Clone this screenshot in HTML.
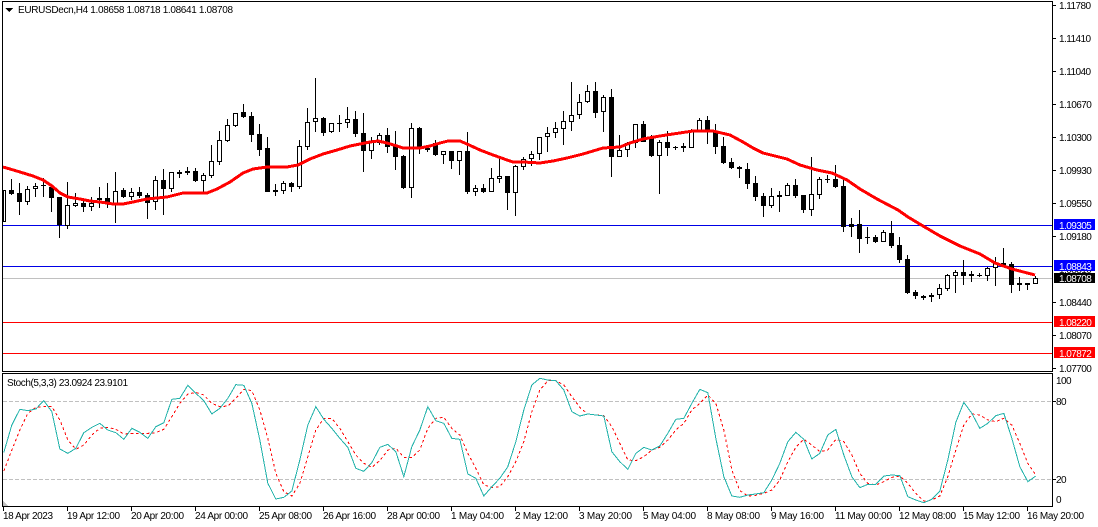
<!DOCTYPE html>
<html><head><meta charset="utf-8"><style>
html,body{margin:0;padding:0;background:#fff;width:1098px;height:527px;overflow:hidden}
svg{display:block;position:absolute;left:0;top:0}
text{font-family:"Liberation Sans",sans-serif;font-size:10px;fill:#000}
.p{letter-spacing:-.55px}
.w{fill:#fff}
</style></head><body>
<svg width="1098" height="527" viewBox="0 0 1098 527" xmlns="http://www.w3.org/2000/svg">
<text class="p" x="1059" y="273">1.08810</text>
<g shape-rendering="crispEdges">
<path stroke="#c0c0c0" fill="none" d="M3 278.5H1052"/>
<path stroke="#0000e6" fill="none" d="M3 225.5H1052M3 266.5H1052"/>
<path stroke="#f00" fill="none" d="M3 322.5H1052M3 353.5H1052"/>
<path stroke="#000" fill="none" d="M3.5 190V222M11.5 179V195M19.5 183V215M27.5 186V205M35.5 183V197M43.5 178V197M51.5 184V212M59.5 197V238M67.5 182V229M75.5 193V207M83.5 199V212M91.5 197V211M99.5 187V208M107.5 183V208M115.5 172V223M123.5 188V198M131.5 188V200M139.5 187V198M147.5 193V219M155.5 176V210M163.5 169V215M171.5 172V192M179.5 170V178M187.5 167V175M195.5 168V182M203.5 173V193M211.5 145V178M219.5 131V165M227.5 119V142M235.5 113V127M243.5 104V118M251.5 112V142M259.5 124V156M267.5 137V192M275.5 184V196M283.5 181V194M291.5 182V192M299.5 140V189M307.5 108V150M315.5 78V132M323.5 117V136M331.5 123V133M339.5 115V132M347.5 107V128M355.5 111V137M363.5 113V172M371.5 137V159M379.5 133V145M387.5 128V153M395.5 131V170M403.5 155V189M411.5 123V198M419.5 127V154M427.5 147V152M435.5 140V156M443.5 151V164M451.5 151V169M459.5 151V175M467.5 132V194M475.5 185V196M483.5 184V193M491.5 168V192M499.5 159V183M507.5 176V210M515.5 165V216M523.5 157V170M531.5 151V166M539.5 137V160M547.5 127V152M555.5 122V138M563.5 111V145M571.5 82V131M579.5 94V119M587.5 85V103M595.5 82V118M603.5 95V132M611.5 89V177M619.5 135V157M627.5 142V157M635.5 124V148M643.5 121V142M651.5 135V157M659.5 140V194M667.5 131V156M675.5 146V150M683.5 143V152M691.5 129V148M699.5 118V132M707.5 116V144M715.5 124V154M723.5 137V164M731.5 158V169M739.5 166V178M747.5 163V189M755.5 176V201M763.5 193V217M771.5 188V208M779.5 191V212M787.5 183V196M795.5 179V198M803.5 195V213M811.5 157V216M819.5 177V199M827.5 175V183M835.5 165V188M843.5 180V232M851.5 218V237M859.5 210V253M867.5 227V244M875.5 235V243M883.5 230V242M891.5 221V248M899.5 237V263M907.5 255V294M915.5 290V299M923.5 295V300M931.5 293V302M939.5 284V299M947.5 274V291M955.5 270V293M963.5 260V285M971.5 271V282M979.5 273V277M987.5 267V281M995.5 257V286M1003.5 248V266M1011.5 262V293M1019.5 277V291M1027.5 283V290M1035.5 276V284"/>
<path stroke="#000" fill="#fff" d="M3.5 190.5h2V221.5h-2zM25.5 189.5h4V201.5h-4zM33.5 186.5h4V188.5h-4zM65.5 205.5h4V225.5h-4zM73.5 203.5h4V205.5h-4zM89.5 203.5h4V206.5h-4zM113.5 191.5h4V204.5h-4zM129.5 192.5h4V196.5h-4zM153.5 180.5h4V201.5h-4zM169.5 172.5h4V188.5h-4zM201.5 175.5h4V180.5h-4zM209.5 161.5h4V175.5h-4zM217.5 140.5h4V161.5h-4zM225.5 125.5h4V140.5h-4zM233.5 113.5h4V125.5h-4zM281.5 183.5h4V190.5h-4zM297.5 146.5h4V186.5h-4zM305.5 122.5h4V146.5h-4zM313.5 118.5h4V121.5h-4zM329.5 123.5h4V131.5h-4zM345.5 119.5h4V122.5h-4zM369.5 142.5h4V150.5h-4zM377.5 135.5h4V142.5h-4zM409.5 128.5h4V187.5h-4zM441.5 151.5h4V154.5h-4zM457.5 151.5h4V160.5h-4zM473.5 188.5h4V191.5h-4zM489.5 178.5h4V191.5h-4zM497.5 176.5h4V178.5h-4zM513.5 166.5h4V192.5h-4zM521.5 159.5h4V166.5h-4zM529.5 154.5h4V158.5h-4zM537.5 137.5h4V153.5h-4zM545.5 133.5h4V136.5h-4zM553.5 128.5h4V132.5h-4zM561.5 121.5h4V128.5h-4zM569.5 115.5h4V121.5h-4zM577.5 102.5h4V114.5h-4zM585.5 91.5h4V101.5h-4zM601.5 97.5h4V111.5h-4zM617.5 150.5h4V156.5h-4zM625.5 143.5h4V149.5h-4zM633.5 124.5h4V142.5h-4zM657.5 142.5h4V155.5h-4zM689.5 130.5h4V147.5h-4zM697.5 120.5h4V130.5h-4zM769.5 196.5h4V205.5h-4zM785.5 185.5h4V195.5h-4zM809.5 194.5h4V209.5h-4zM817.5 179.5h4V194.5h-4zM881.5 232.5h4V241.5h-4zM929.5 295.5h4V296.5h-4zM937.5 288.5h4V294.5h-4zM945.5 275.5h4V288.5h-4zM953.5 272.5h4V275.5h-4zM969.5 274.5h4V275.5h-4zM985.5 268.5h4V275.5h-4zM993.5 263.5h4V267.5h-4zM1025.5 283.5h4V284.5h-4zM1033.5 278.5h4V283.5h-4z"/>
<path fill="#000" d="M9 190h5V194h-5zM17 193h5V202h-5zM41 185h5V186h-5zM49 187h5V198h-5zM57 197h5V225h-5zM81 203h5V207h-5zM97 198h5V200h-5zM105 198h5V203h-5zM121 190h5V197h-5zM137 192h5V196h-5zM145 195h5V203h-5zM161 180h5V189h-5zM177 172h5V174h-5zM185 171h5V173h-5zM193 171h5V181h-5zM241 112h5V117h-5zM249 116h5V135h-5zM257 134h5V150h-5zM265 148h5V192h-5zM273 190h5V192h-5zM289 183h5V187h-5zM321 118h5V133h-5zM337 123h5V124h-5zM353 119h5V134h-5zM361 133h5V151h-5zM385 135h5V147h-5zM393 145h5V157h-5zM401 156h5V188h-5zM417 128h5V148h-5zM425 148h5V150h-5zM433 143h5V155h-5zM449 151h5V161h-5zM465 151h5V192h-5zM481 188h5V192h-5zM505 176h5V193h-5zM593 91h5V113h-5zM609 97h5V157h-5zM641 124h5V142h-5zM649 137h5V156h-5zM665 142h5V148h-5zM673 147h5V148h-5zM681 146h5V148h-5zM705 120h5V132h-5zM713 132h5V147h-5zM721 146h5V163h-5zM729 162h5V168h-5zM737 167h5V169h-5zM745 169h5V184h-5zM753 183h5V197h-5zM761 196h5V206h-5zM777 195h5V197h-5zM793 185h5V196h-5zM801 195h5V210h-5zM825 179h5V180h-5zM833 179h5V187h-5zM841 186h5V227h-5zM849 224h5V227h-5zM857 224h5V239h-5zM865 237h5V238h-5zM873 237h5V242h-5zM889 233h5V246h-5zM897 245h5V260h-5zM905 259h5V293h-5zM913 292h5V296h-5zM921 296h5V298h-5zM961 272h5V276h-5zM977 275h5V276h-5zM1001 263h5V266h-5zM1009 264h5V285h-5zM1017 283h5V285h-5z"/>
<polyline fill="none" stroke="#f00" stroke-width="3" stroke-linejoin="round" points="3,167 10,169 20,172 33,176 43,180 52,186 60,193 68,197 80,199 90,201 100,202 113,204 123,204 133,202 147,199 167,197 183,193 207,193 217,189 230,182 243,173 253,169 267,167 287,167 298,165 310,159 323,154 337,150 350,146 360,144 370,142 378,141 387,143 397,146 403,148 420,148 430,146 440,143 448,141 460,141 467,144 480,150 493,155 507,160 513,162 523,162 540,163 553,161 567,158 583,154 603,148 620,147 630,143 643,139 660,136 673,134 693,131 713,131 730,135 743,142 753,148 763,153 787,159 800,165 817,170 832,173 847,180 860,189 877,199 898,210 908,217 923,226 940,236 960,246 980,254 995,263 1012,269 1035,275"/>
<path stroke="#c0c0c0" stroke-dasharray="4 2" fill="none" d="M3 401.5H1052M3 479.5H1052"/>
<g transform="translate(.5,370) scale(.33333)" fill="none" stroke-width="3">
<polyline stroke="#f00" stroke-dasharray="8 8" points="10,303 34,240 58,180 82,130 106,112 130,110 154,110 178,150 202,210 226,238 250,225 274,195 298,175 322,172 346,178 370,192 394,190 418,190 442,190 466,188 490,178 514,140 538,100 562,72 586,67 610,75 634,100 658,110 682,108 706,85 730,58 754,62 778,120 802,205 826,310 850,365 874,378 898,340 922,260 946,180 970,145 994,145 1018,175 1042,215 1066,255 1090,280 1114,292 1138,272 1162,240 1186,235 1210,262 1234,262 1258,240 1282,175 1306,145 1330,142 1354,175 1378,195 1402,250 1426,295 1450,345 1474,352 1498,350 1522,320 1546,275 1570,215 1594,125 1618,60 1642,32 1666,32 1690,45 1714,80 1738,112 1762,132 1786,135 1810,137 1834,170 1858,220 1882,270 1906,272 1930,260 1954,240 1978,232 2002,210 2026,180 2050,160 2074,120 2098,100 2122,75 2146,100 2170,180 2194,300 2218,362 2242,378 2266,376 2290,370 2314,360 2338,330 2362,275 2386,232 2410,208 2434,225 2458,245 2482,240 2506,208 2530,215 2554,255 2578,310 2602,340 2626,345 2650,335 2674,322 2698,318 2722,340 2746,370 2770,393 2794,390 2818,378 2842,320 2866,240 2890,165 2914,132 2938,135 2962,150 2986,155 3010,145 3034,165 3058,220 3082,280 3106,315"/>
<polyline stroke="#20b2aa" points="10,247 34,165 58,118 82,122 106,117 130,92 154,125 178,237 202,250 226,235 250,188 274,172 298,160 322,180 346,188 370,208 394,175 418,187 442,205 466,170 490,158 514,88 538,85 562,46 586,70 610,92 634,132 658,115 682,85 706,44 730,46 754,100 778,210 802,340 826,387 850,382 874,363 898,270 922,165 946,110 970,148 994,175 1018,205 1042,232 1066,295 1090,304 1114,278 1138,232 1162,223 1186,245 1210,320 1234,230 1258,180 1282,110 1306,152 1330,160 1354,205 1378,208 1402,312 1426,325 1450,378 1474,350 1498,325 1522,290 1546,215 1570,120 1594,45 1618,25 1642,30 1666,32 1690,60 1714,125 1738,138 1762,132 1786,135 1810,138 1834,245 1858,275 1882,298 1906,250 1930,232 1954,240 1978,228 2002,190 2026,148 2050,145 2074,100 2098,58 2122,68 2146,205 2170,320 2194,378 2218,382 2242,375 2266,372 2290,368 2314,330 2338,280 2362,215 2386,187 2410,208 2434,267 2458,250 2482,195 2506,178 2530,255 2554,320 2578,353 2602,343 2626,343 2650,318 2674,315 2698,317 2722,380 2746,390 2770,398 2794,388 2818,363 2842,270 2866,157 2890,97 2914,130 2938,175 2962,160 2986,137 3010,130 3034,205 3058,290 3082,335 3106,318"/>
</g>
<path fill="#c0c0c0" d="M3 501L8 506H3z"/>
<path stroke="#000" fill="none" d="M2.5 1.5H1052.5V371.5H2.5zM2.5 373.5H1052.5V506.5H2.5z"/>
<path stroke="#000" fill="none" d="M1053 5.5h3M1053 38.5h3M1053 71.5h3M1053 104.5h3M1053 137.5h3M1053 170.5h3M1053 203.5h3M1053 236.5h3M1053 302.5h3M1053 335.5h3M1053 368.5h3M1053 401.5h3M1053 479.5h3M3.5 507v4M67.5 507v4M131.5 507v4M195.5 507v4M259.5 507v4M323.5 507v4M387.5 507v4M451.5 507v4M515.5 507v4M579.5 507v4M643.5 507v4M707.5 507v4M771.5 507v4M835.5 507v4M899.5 507v4M963.5 507v4M1027.5 507v4"/>
<path fill="#000" d="M5 8h8L9 12z"/>
<path fill="#0000ff" d="M1054 219h41v11h-41zM1054 260h41v11h-41z"/>
<path fill="#000" d="M1054 273h41v10h-41z"/>
<path fill="#ff0000" d="M1054 316h41v11h-41zM1054 347h41v11h-41z"/>
</g>
<text x="18" y="13" textLength="215">EURUSDecn,H4  1.08658 1.08718 1.08641 1.08708</text>
<text x="7" y="386" textLength="121">Stoch(5,3,3) 23.0924 23.9101</text>
<g class="p">
<text class="p" x="1059" y="9">1.11780</text>
<text class="p" x="1059" y="42">1.11410</text>
<text class="p" x="1059" y="75">1.11040</text>
<text class="p" x="1059" y="108">1.10670</text>
<text class="p" x="1059" y="141">1.10300</text>
<text class="p" x="1059" y="174">1.09930</text>
<text class="p" x="1059" y="207">1.09550</text>
<text class="p" x="1059" y="240">1.09180</text>
<text class="p" x="1059" y="306">1.08440</text>
<text class="p" x="1059" y="339">1.08070</text>
<text class="p" x="1059" y="372">1.07700</text>
<text class="p w" x="1059" y="229">1.09305</text>
<text class="p w" x="1059" y="270">1.08843</text>
<text class="p w" x="1059" y="282">1.08708</text>
<text class="p w" x="1059" y="326">1.08220</text>
<text class="p w" x="1059" y="357">1.07872</text>
<text class="p" x="1056" y="384">100</text>
<text class="p" x="1056" y="405">80</text>
<text class="p" x="1056" y="483">20</text>
<text class="p" x="1056" y="503">0</text>
</g>
<text x="3" y="519" textLength="50">18 Apr 2023</text>
<text x="67" y="519" textLength="53">19 Apr 12:00</text>
<text x="131" y="519" textLength="53">20 Apr 20:00</text>
<text x="195" y="519" textLength="53">24 Apr 00:00</text>
<text x="259" y="519" textLength="53">25 Apr 08:00</text>
<text x="323" y="519" textLength="53">26 Apr 16:00</text>
<text x="387" y="519" textLength="53">28 Apr 00:00</text>
<text x="451" y="519" textLength="53">1 May 04:00</text>
<text x="515" y="519" textLength="53">2 May 12:00</text>
<text x="579" y="519" textLength="53">3 May 20:00</text>
<text x="643" y="519" textLength="53">5 May 04:00</text>
<text x="707" y="519" textLength="53">8 May 08:00</text>
<text x="771" y="519" textLength="53">9 May 16:00</text>
<text x="835" y="519" textLength="57">11 May 00:00</text>
<text x="899" y="519" textLength="57">12 May 08:00</text>
<text x="963" y="519" textLength="57">15 May 12:00</text>
<text x="1027" y="519" textLength="57">16 May 20:00</text>
</svg>
</body></html>
